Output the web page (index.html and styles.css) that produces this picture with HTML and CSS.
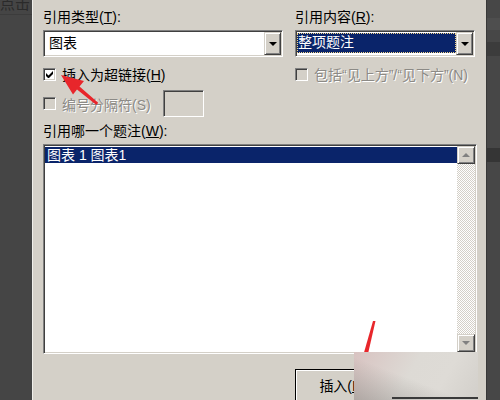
FILE: index.html
```html
<!DOCTYPE html>
<html lang="zh-CN">
<head>
<meta charset="utf-8">
<title>交叉引用</title>
<link rel="stylesheet" href="styles.css">
</head>
<body>
<div class="screen">
  <aside class="doc-left">
    <div class="doc-cell"><span class="doc-text">点击</span></div>
  </aside>

  <main class="dialog">
    <div class="top-grid">
      <div class="col">
        <div class="lbl">引用类型(<u>T</u>):</div>
        <div class="combo">
          <span class="combo-text">图表</span>
          <span class="raised drop-btn"><i class="tri-down"></i></span>
        </div>
        <div class="check-row">
          <span class="chk">
            <svg width="7" height="7" viewBox="0 0 7 7"><path d="M0 2v3l2 2h1l4-4V0L2.5 4.5z" fill="#000"/></svg>
          </span>
          <span>插入为超链接(<u>H</u>)</span>
        </div>
        <div class="check-row sep-row">
          <span class="chk chk-off"></span>
          <span class="dis sep-text">编号分隔符(S)</span>
          <span class="sep-input"></span>
        </div>
      </div>

      <div class="col">
        <div class="lbl">引用内容(<u>R</u>):</div>
        <div class="combo">
          <span class="combo-sel">整项题注</span>
          <span class="raised drop-btn"><i class="tri-down"></i></span>
        </div>
        <div class="check-row">
          <span class="chk chk-off"></span>
          <span class="dis">包括“见上方”/“见下方”(N)</span>
        </div>
      </div>
    </div>

    <div class="lbl lbl-list">引用哪一个题注(<u>W</u>):</div>
    <div class="listbox">
      <div class="list-items">
        <div class="list-item sel">图表 1 图表1</div>
      </div>
      <div class="vscroll">
        <span class="raised sb-btn"><i class="tri-up tri-dis"></i></span>
        <span class="sb-track"></span>
        <span class="raised sb-btn"><i class="tri-down tri-dis"></i></span>
      </div>
    </div>

    <div class="btn-row">
      <button class="btn">插入(<u>I</u>)</button>
    </div>
  </main>

  <aside class="doc-right">
    <span class="dr-band dr-band-top"></span>
    <span class="dr-band"></span>
    <span class="dr-band dr-band-low"></span>
  </aside>

  <!-- red markup strokes drawn over the dialog -->
  <svg class="annot" width="500" height="400" viewBox="0 0 500 400">
    <path d="M61 75 L84 81 L79.5 86.5 L98.2 102.8 L96.4 105 L77 89.5 L73 94.5 Z" fill="#e8262b"/>
    <path d="M373 321 L375.5 321 L367.5 356 L363 356 Z" fill="#e8262b"/>
  </svg>
  <div class="stamp"><span class="stamp-edge"></span></div>
</div>
</body>
</html>
```

FILE: styles.css
```css
html, body {
  margin: 0;
  padding: 0;
}

body {
  width: 500px;
  height: 400px;
  overflow: hidden;
  background: #454545;
  font-family: "Liberation Sans", "Noto Sans CJK SC", sans-serif;
  font-size: 14px;
  color: #000;
}

u {
  text-decoration: underline;
  text-underline-offset: 1px;
}

.screen {
  position: relative;
  display: flex;
  width: 500px;
  height: 400px;
  overflow: hidden;
}

/* document page behind the dialog */
.doc-left {
  flex: none;
  width: 32px;
  background: #454545;
}

.doc-cell {
  height: 14px;
  overflow: hidden;
  border-bottom: 1px solid #3c3c3c;
}

.doc-text {
  display: block;
  margin-top: -6px;
  font-family: "Noto Sans CJK SC", sans-serif;
  font-size: 15px;
  line-height: 18px;
  color: #2a2a2a;
}

.doc-right {
  flex: none;
  width: 13px;
  display: flex;
  flex-direction: column;
  background: #474747;
}

.dr-band {
  height: 14px;
  margin-top: 12px;
  background: #3c3c3c;
}

.dr-band-top {
  height: 12px;
  margin-top: 18px;
  background: #4e4e4e;
}

.dr-band-low {
  height: 14px;
  margin-top: 92px;
  background: #353535;
}

/* the dialog */
.dialog {
  flex: none;
  box-sizing: border-box;
  width: 455px;
  height: 400px;
  padding: 9px 0 0 10px;
  background: #d4d0c8;
  border-left: 1px solid #efeeea;
  border-right: 1px solid #383838;
  overflow: hidden;
}

.top-grid {
  display: grid;
  grid-template-columns: 240px 180px;
  column-gap: 12px;
}

.col {
  display: flex;
  flex-direction: column;
}

.lbl {
  height: 16px;
  line-height: 16px;
  margin-bottom: 5px;
  white-space: nowrap;
}

/* sunken field */
.combo,
.listbox,
.chk,
.sep-input {
  box-sizing: border-box;
  border: 1px solid;
  border-color: #808080 #ffffff #ffffff #808080;
  box-shadow: inset 1px 1px 0 #404040, inset -1px -1px 0 #d4d0c8;
}

.combo {
  display: flex;
  align-items: stretch;
  height: 27px;
  padding: 1px;
  background: #fff;
}

.combo-text {
  flex: 1;
  padding-left: 4px;
  line-height: 23px;
}

.combo-sel {
  flex: 1;
  margin: 1px 0 2px 0;
  padding-left: 1px;
  line-height: 19px;
  background: #0a246a;
  color: #fff;
  outline: 1px dotted #f3d68a;
  outline-offset: -1px;
}

/* raised button face */
.raised {
  box-sizing: border-box;
  background: #d4d0c8;
  border: 1px solid;
  border-color: #d4d0c8 #404040 #404040 #d4d0c8;
  box-shadow: inset 1px 1px 0 #fff, inset -1px -1px 0 #808080;
  display: flex;
  align-items: center;
  justify-content: center;
}

.drop-btn {
  flex: none;
  width: 17px;
}

.tri-down,
.tri-up {
  display: block;
  width: 0;
  height: 0;
  border-left: 4px solid transparent;
  border-right: 4px solid transparent;
}

.tri-down {
  border-top: 4px solid #000;
}

.tri-up {
  border-bottom: 4px solid #000;
}

.tri-down.tri-dis {
  border-top-color: #808080;
}

.tri-up.tri-dis {
  border-bottom-color: #808080;
}

/* check boxes */
.check-row {
  display: flex;
  align-items: center;
  gap: 6px;
  height: 16px;
  margin-top: 9px;
  white-space: nowrap;
}

.chk {
  flex: none;
  width: 13px;
  height: 13px;
  background: #fff;
  display: flex;
  align-items: center;
  justify-content: center;
}

.chk-off {
  background: #d4d0c8;
}

.dis {
  color: #8c8a86;
  text-shadow: 1px 1px 0 #fff;
}

.sep-row {
  height: 27px;
  margin-top: 8px;
}

.sep-text {
  width: 95px;
}

.sep-input {
  flex: none;
  width: 41px;
  height: 27px;
  background: #d4d0c8;
}

.lbl-list {
  margin-top: 6px;
  margin-bottom: 5px;
}

/* list of captions */
.listbox {
  display: flex;
  width: 434px;
  height: 210px;
  padding: 1px;
  background: #fff;
}

.list-items {
  flex: 1;
  padding-top: 1px;
}

.list-item {
  height: 16px;
  line-height: 16px;
  padding-left: 2px;
  white-space: nowrap;
}

.list-item.sel {
  background: #0a246a;
  color: #fff;
}

.vscroll {
  flex: none;
  width: 18px;
  display: flex;
  flex-direction: column;
}

.sb-btn {
  flex: none;
  height: 18px;
}

.sb-track {
  flex: 1;
  background: repeating-conic-gradient(#d4d0c8 0 25%, #ffffff 0 50%) 0 0 / 2px 2px;
}

/* dialog buttons */
.btn-row {
  display: grid;
  grid-template-columns: 240px 180px;
  column-gap: 12px;
  margin-top: 15px;
}

.btn {
  grid-column: 2;
  box-sizing: border-box;
  width: 90px;
  height: 34px;
  padding: 0 0 2px 0;
  font: inherit;
  color: #000;
  background: #d4d0c8;
  border: 1px solid #000;
  box-shadow: inset 1px 1px 0 #fff, inset -1px -1px 0 #404040, inset -2px -2px 0 #808080;
}

/* markup layer */
.annot {
  position: absolute;
  left: 0;
  top: 0;
  pointer-events: none;
}

.stamp {
  position: absolute;
  left: 354px;
  top: 352px;
  width: 124px;
  height: 48px;
  background:
    linear-gradient(to top right, rgba(140, 136, 132, 0.55) 0%, rgba(140, 136, 132, 0) 45%),
    linear-gradient(120deg, #d8c3c1 0%, #dddad5 45%, #dedbd6 70%, #d2cfca 100%);
}

.stamp-edge {
  position: absolute;
  left: 38px;
  right: 0;
  top: 45px;
  height: 2px;
  background: #3a3a3a;
}
```
